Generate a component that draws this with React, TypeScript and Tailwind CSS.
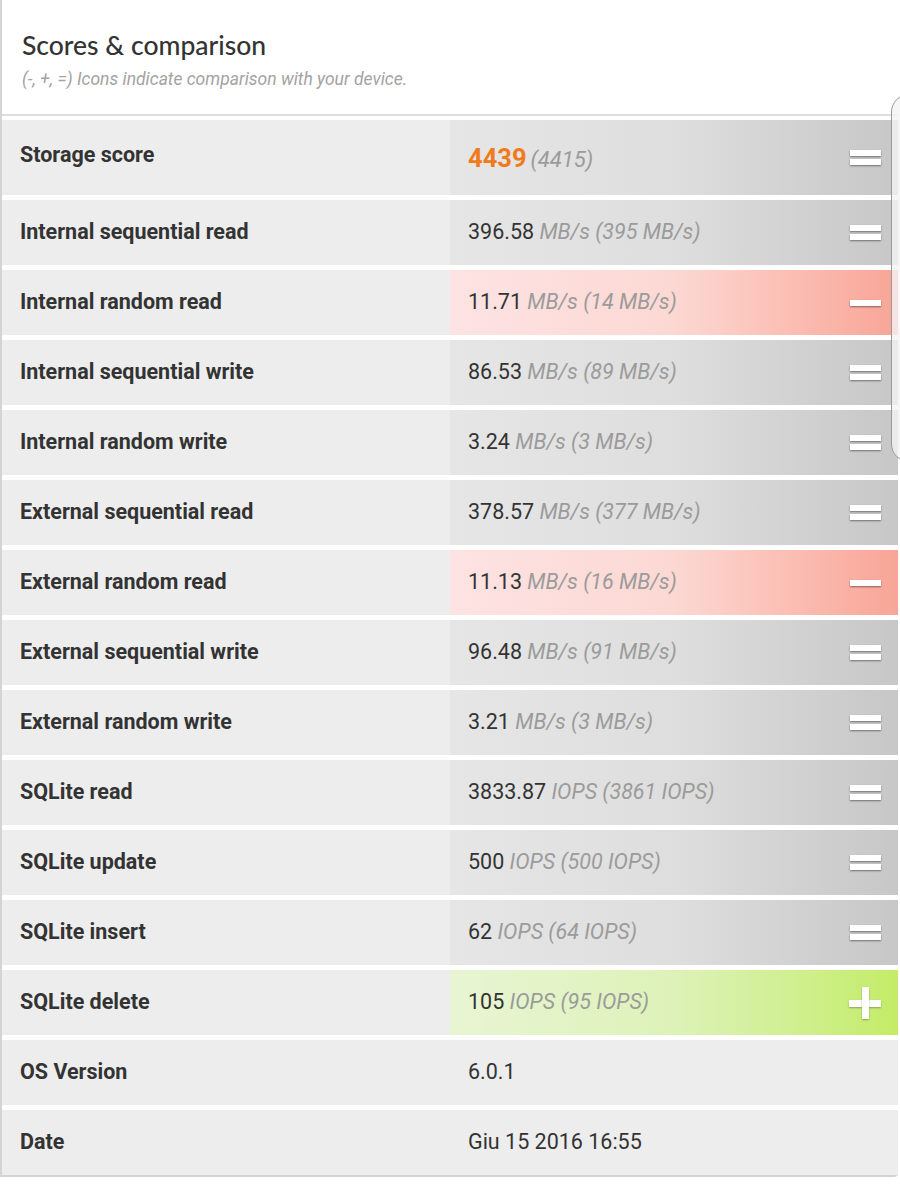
import React from 'react';

type Cmp = 'eq' | 'minus' | 'plus' | 'none';

interface Row {
    label: string;
    value: string;
    unit?: string;
    ref?: string;
    cmp: Cmp;
}

const rows: Row[] = [
    { label: 'Internal sequential read', value: '396.58', unit: 'MB/s', ref: '(395 MB/s)', cmp: 'eq' },
    { label: 'Internal random read', value: '11.71', unit: 'MB/s', ref: '(14 MB/s)', cmp: 'minus' },
    { label: 'Internal sequential write', value: '86.53', unit: 'MB/s', ref: '(89 MB/s)', cmp: 'eq' },
    { label: 'Internal random write', value: '3.24', unit: 'MB/s', ref: '(3 MB/s)', cmp: 'eq' },
    { label: 'External sequential read', value: '378.57', unit: 'MB/s', ref: '(377 MB/s)', cmp: 'eq' },
    { label: 'External random read', value: '11.13', unit: 'MB/s', ref: '(16 MB/s)', cmp: 'minus' },
    { label: 'External sequential write', value: '96.48', unit: 'MB/s', ref: '(91 MB/s)', cmp: 'eq' },
    { label: 'External random write', value: '3.21', unit: 'MB/s', ref: '(3 MB/s)', cmp: 'eq' },
    { label: 'SQLite read', value: '3833.87', unit: 'IOPS', ref: '(3861 IOPS)', cmp: 'eq' },
    { label: 'SQLite update', value: '500', unit: 'IOPS', ref: '(500 IOPS)', cmp: 'eq' },
    { label: 'SQLite insert', value: '62', unit: 'IOPS', ref: '(64 IOPS)', cmp: 'eq' },
    { label: 'SQLite delete', value: '105', unit: 'IOPS', ref: '(95 IOPS)', cmp: 'plus' },
    { label: 'OS Version', value: '6.0.1', cmp: 'none' },
    { label: 'Date', value: 'Giu 15 2016 16:55', cmp: 'none' },
];

const bar = 'h-[6px] w-[31px] bg-white shadow-[0_1px_2px_rgba(0,0,0,0.45)]';

function CmpIcon({ cmp }: { cmp: Cmp }) {
    if (cmp === 'eq') {
        return (
            <div className="flex flex-col gap-[3px]">
                <div className={bar} />
                <div className={bar} />
            </div>
        );
    }
    if (cmp === 'minus') {
        return <div className={bar} />;
    }
    if (cmp === 'plus') {
        return (
            <div className="relative h-[32px] w-[32px]">
                <div className="absolute left-0 top-[13px] h-[7px] w-[32px] bg-white shadow-[0_1px_2px_rgba(0,0,0,0.3)]" />
                <div className="absolute left-[13px] top-0 h-[32px] w-[7px] bg-white shadow-[0_1px_2px_rgba(0,0,0,0.3)]" />
            </div>
        );
    }
    return null;
}

function cellBg(cmp: Cmp) {
    if (cmp === 'minus') return 'bg-gradient-to-r from-[#fde3e3] via-[#fcd8d3] to-[#f8a596]';
    if (cmp === 'plus') return 'bg-gradient-to-r from-[#e8f5d3] via-[#ddf2b8] to-[#c4ec66]';
    if (cmp === 'eq') return 'bg-gradient-to-r from-[#e6e6e6] via-[#dedede] to-[#c7c7c7]';
    return 'bg-[#ededed]';
}

export default function App() {
    return (
        <div className="relative w-[900px] h-[1184px] bg-white" style={{ fontFamily: 'Roboto, "Noto Sans", sans-serif' }}>
            <div className="w-[898px] border-l-2 border-b-2 border-[#d4d4d4] rounded-br-sm">
                <div className="h-[116px] border-b-2 border-[#dedede] pl-5 pt-[29px]">
                    <h2 className="text-[26.5px] leading-[32px] text-[#333] font-medium" style={{ fontFamily: 'Lato, "Open Sans", sans-serif' }}>
                        Scores &amp; comparison
                    </h2>
                    <p className="mt-[7px] text-[17.5px] leading-[22px] italic text-[#a3a3a3]">
                        (-, +, =) Icons indicate comparison with your device.
                    </p>
                </div>

                <div className="flex flex-col gap-[5px] pt-[4px]">
                    <div className="flex h-[75px]">
                        <div className="w-[448px] bg-[#ededed] pl-[18px] pt-[19px] text-[21.5px] font-bold text-[#333]">
                            Storage score
                        </div>
                        <div className={'flex flex-1 items-center justify-between pl-[18px] pr-[17px] ' + cellBg('eq')}>
                            <span className="pt-[2px]">
                                <span className="text-[25.5px] font-bold text-[#f17a1a]">4439</span>{' '}
                                <span className="text-[22px] italic text-[#9b9b9b]">(4415)</span>
                            </span>
                            <CmpIcon cmp="eq" />
                        </div>
                    </div>

                    {rows.map((r) => (
                        <div key={r.label} className="flex h-[65px]">
                            <div className="flex w-[448px] items-center bg-[#ededed] pl-[18px] text-[21.5px] font-bold text-[#333]">
                                {r.label}
                            </div>
                            <div className={'flex flex-1 items-center justify-between pl-[18px] pr-[17px] ' + cellBg(r.cmp)}>
                                <span className="text-[21.5px] text-[#333]">
                                    {r.value}
                                    {r.unit && (
                                        <span className="italic text-[#9b9b9b]">
                                            {' '}
                                            {r.unit} {r.ref}
                                        </span>
                                    )}
                                </span>
                                <CmpIcon cmp={r.cmp} />
                            </div>
                        </div>
                    ))}
                </div>
            </div>

            {/* overscroll edge glow */}
            <div className="absolute left-[891px] top-[94px] h-[368px] w-[20px] rounded-l-[18px] border border-[#9a9a9a] bg-[#f4f4f4]/80" />
        </div>
    );
}
